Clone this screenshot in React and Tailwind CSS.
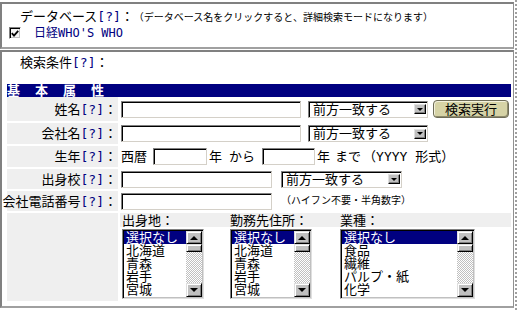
import React from "react";

function Help() {
  return <span className="text-[#000080]">[?]</span>;
}

function TextBox({ w }) {
  return (
    <div
      className={`${w} h-[17px] shrink-0 bg-white border border-t-[#808080] border-l-[#808080] border-r-[#d4d0c8] border-b-[#d4d0c8] shadow-[inset_1px_1px_0_#000]`}
    />
  );
}

function ArrowBox() {
  return (
    <div className="w-[12px] h-[10px] bg-[#c0c0c0] border border-t-[#e0e0e0] border-l-[#e0e0e0] border-r-black border-b-black shadow-[inset_-1px_-1px_0_#808080] flex items-center justify-center">
      <div className="w-0 h-0 border-x-[3px] border-x-transparent border-t-[3px] border-t-black" />
    </div>
  );
}

function Select({ w }) {
  return (
    <div
      className={`${w} h-[17px] shrink-0 bg-white border border-t-[#808080] border-l-[#808080] border-r-[#d4d0c8] border-b-[#d4d0c8] shadow-[inset_1px_1px_0_#000] flex items-center justify-between pl-[4px] pr-[1px]`}
    >
      <span className="text-[13px] leading-[13px] whitespace-nowrap">前方一致する</span>
      <ArrowBox />
    </div>
  );
}

function ScrollBtn({ up, h }) {
  return (
    <div
      className={`${h} w-[16px] bg-[#c0c0c0] border border-t-[#dfdfdf] border-l-[#dfdfdf] border-r-black border-b-black shadow-[inset_1px_1px_0_#fff,inset_-1px_-1px_0_#808080] flex items-center justify-center`}
    >
      {up ? (
        <div className="w-0 h-0 border-x-[4px] border-x-transparent border-b-[4px] border-b-black" />
      ) : (
        <div className="w-0 h-0 border-x-[4px] border-x-transparent border-t-[4px] border-t-black" />
      )}
    </div>
  );
}

function ScrollBar() {
  return (
    <div className="w-[16px] flex flex-col shrink-0">
      <ScrollBtn up h="h-[13px]" />
      <div className="flex-1 flex flex-col bg-[image:repeating-conic-gradient(#c0c0c0_0_25%,#ffffff_0_50%)] bg-[length:2px_2px]">
        <div className="h-[8px] w-[16px] bg-[#c0c0c0] border border-t-[#dfdfdf] border-l-[#dfdfdf] border-r-black border-b-black shadow-[inset_1px_1px_0_#fff,inset_-1px_-1px_0_#808080]" />
      </div>
      <ScrollBtn h="h-[14px]" />
    </div>
  );
}

function ListBox({ w, items }) {
  return (
    <div
      className={`${w} h-[70px] shrink-0 bg-white border border-t-[#808080] border-l-[#808080] border-r-[#dfdfdf] border-b-[#dfdfdf] shadow-[inset_1px_1px_0_#000,inset_-1px_-1px_0_#c0c0c0] p-[1px] flex`}
    >
      <div className="flex-1 flex flex-col">
        {items.map((t, i) => (
          <div
            key={t}
            className={
              i === 0
                ? "h-[13px] leading-[13px] bg-[#000080] text-white pl-[2px] whitespace-nowrap"
                : "h-[13px] leading-[13px] pl-[2px] whitespace-nowrap"
            }
          >
            {t}
          </div>
        ))}
      </div>
      <ScrollBar />
    </div>
  );
}

function Label({ children }) {
  return (
    <div className="bg-[#efefef] flex items-center justify-end pr-[1px] whitespace-nowrap">
      {children}
    </div>
  );
}

export default function App() {
  return (
    <div className="w-[519px] h-[310px] bg-white flex overflow-hidden text-black font-['DejaVu_Sans_Mono','Noto_Sans_CJK_JP',sans-serif] text-[13px] leading-[13px]">
      <div className="w-[514px] shrink-0 flex flex-col pt-[2px]">
        {/* Panel 1 */}
        <div className="h-[47px] shrink-0 border-t-2 border-l-2 border-r border-b-2 border-t-[#808080] border-l-[#808080] border-r-[#909090] border-b-[#a0a0a0] pt-[6px]">
          <div className="flex items-end pl-[18px] h-[13px] whitespace-nowrap">
            <span>
              データベース<Help />：
            </span>
            <span className="text-[10px] leading-[10px]">
              （データベース名をクリックすると、詳細検索モードになります）
            </span>
          </div>
          <div className="flex items-center mt-[4px] pl-[7px] h-[12px]">
            <div className="w-[12px] h-[12px] bg-[#f4f4f4] border border-t-[#808080] border-l-[#808080] border-r-white border-b-white shadow-[inset_1px_1px_0_#000,inset_-1px_-1px_0_#c0c0c0] flex items-center justify-center">
              <svg width="8" height="7" viewBox="0 0 8 7">
                <path d="M0.8 3.2 L3 5.6 L7.2 0.8" stroke="black" strokeWidth="1.8" fill="none" />
              </svg>
            </div>
            <span className="ml-[13px] text-[12px] leading-[12px] text-[#000080] whitespace-nowrap">
              日経WHO'S WHO
            </span>
          </div>
        </div>

        {/* Panel 2 */}
        <div className="mt-[1px] h-[258px] shrink-0 border-t-2 border-l-2 border-r border-b-2 border-t-[#808080] border-l-[#808080] border-r-[#909090] border-b-[#a0a0a0] pt-[4px]">
          <div className="pl-[18px] h-[13px] whitespace-nowrap">
            検索条件<Help />：
          </div>
          <div className="mt-[15px] ml-[5px] w-[504px] h-[13px] bg-[#000080] text-white font-bold flex gap-[15px] text-[13px] leading-[13px]">
            <span>基</span>
            <span>本</span>
            <span>属</span>
            <span>性</span>
          </div>
          <div className="ml-[5px] w-[504px] grid grid-cols-[111px_391px] grid-rows-[24px_21px_21px_20px_20px_88px] gap-[2px]">
            {/* Row 1 */}
            <Label>
              姓名<Help />：
            </Label>
            <div className="flex items-center pl-[1px]">
              <TextBox w="w-[180px]" />
              <div className="ml-[7px]">
                <Select w="w-[120px]" />
              </div>
              <div className="ml-[5px] w-[76px] h-[18px] rounded-[4px] bg-[#d6d3a6] border border-[#6e6c58] shadow-[inset_1px_1px_0_#f2f0dc,inset_-1px_-1px_0_#8e8b6c] flex items-center justify-center text-[13px] leading-[13px] whitespace-nowrap">
                検索実行
              </div>
            </div>

            {/* Row 2 */}
            <Label>
              会社名<Help />：
            </Label>
            <div className="flex items-center pl-[1px]">
              <TextBox w="w-[180px]" />
              <div className="ml-[7px]">
                <Select w="w-[120px]" />
              </div>
            </div>

            {/* Row 3 */}
            <Label>
              生年<Help />：
            </Label>
            <div className="flex items-center pl-[1px] whitespace-nowrap">
              <span>西暦</span>
              <div className="ml-[6px]">
                <TextBox w="w-[54px]" />
              </div>
              <span className="ml-[2px]">年</span>
              <span className="ml-[7px]">から</span>
              <div className="ml-[7px]">
                <TextBox w="w-[53px]" />
              </div>
              <span className="ml-[2px]">年</span>
              <span className="ml-[5px]">まで</span>
              <span className="ml-[2px]">（YYYY 形式）</span>
            </div>

            {/* Row 4 */}
            <Label>
              出身校<Help />：
            </Label>
            <div className="flex items-center pl-[1px]">
              <TextBox w="w-[151px]" />
              <div className="ml-[9px]">
                <Select w="w-[121px]" />
              </div>
            </div>

            {/* Row 5 */}
            <Label>
              会社電話番号<Help />：
            </Label>
            <div className="flex items-center pl-[1px]">
              <TextBox w="w-[151px]" />
              <span className="ml-[9px] text-[10px] leading-[10px] whitespace-nowrap">
                （ハイフン不要・半角数字）
              </span>
            </div>

            {/* Row 6 */}
            <div className="bg-[#efefef]" />
            <div className="flex flex-col">
              <div className="h-[14px] bg-[#efefef] grid grid-cols-[108px_110px_1fr] pl-[2px] items-end whitespace-nowrap">
                <span>出身地：</span>
                <span>勤務先住所：</span>
                <span>業種：</span>
              </div>
              <div className="mt-[2px] grid grid-cols-[108px_110px_1fr] pl-[2px]">
                <ListBox w="w-[82px]" items={["選択なし", "北海道", "青森", "岩手", "宮城"]} />
                <ListBox w="w-[82px]" items={["選択なし", "北海道", "青森", "岩手", "宮城"]} />
                <ListBox w="w-[135px]" items={["選択なし", "食品", "繊維", "パルプ・紙", "化学"]} />
              </div>
            </div>
          </div>
        </div>
      </div>
      <div className="ml-[1px] w-[2px] h-full border-l-2 border-dotted border-[#a0a0a0]" />
    </div>
  );
}
